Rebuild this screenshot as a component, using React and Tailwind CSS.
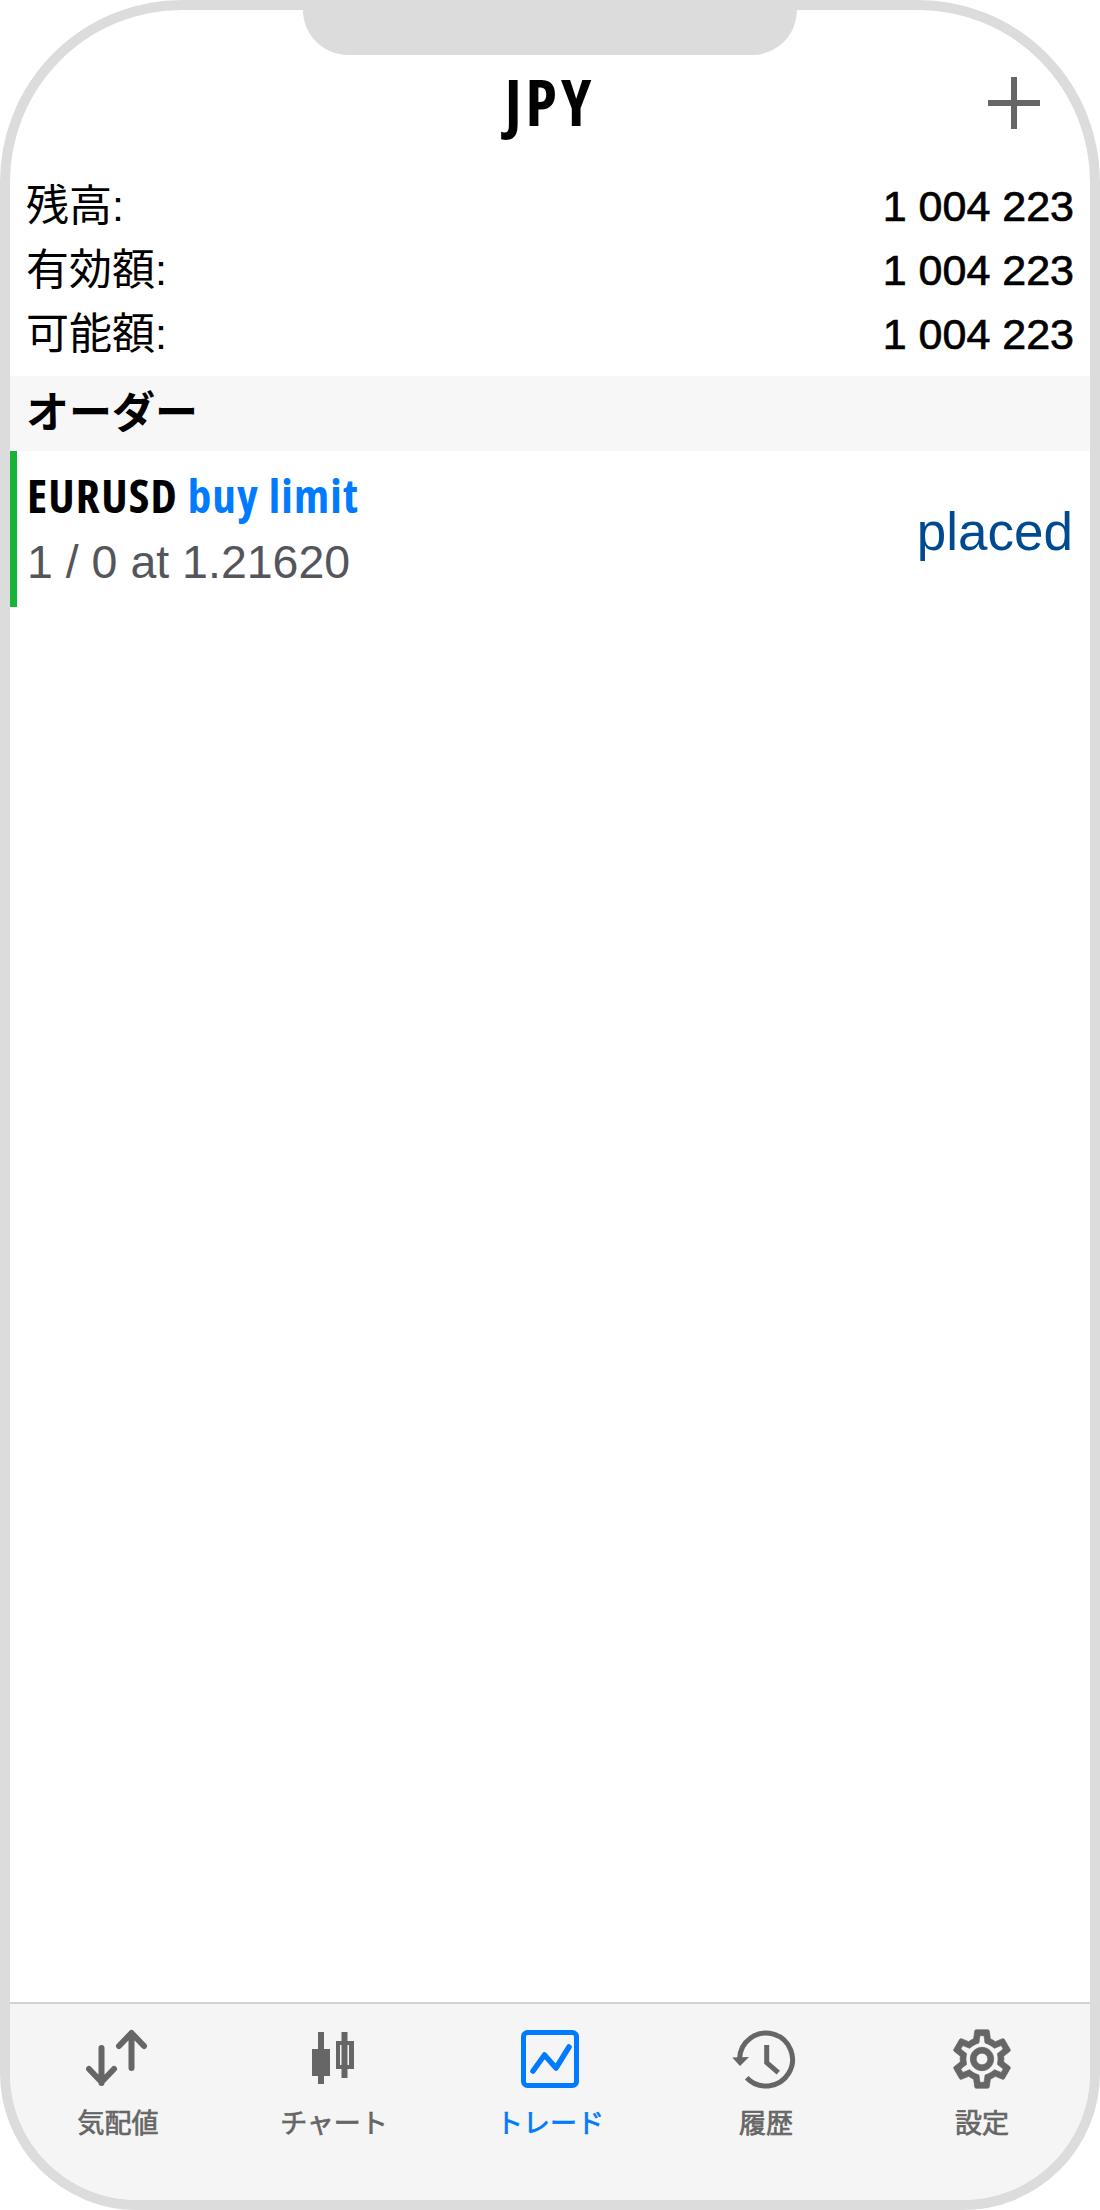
import React from "react";

const cjk = "font-['Liberation_Sans','Noto_Sans_CJK_JP',sans-serif]";
const condensed = "font-['Open_Sans','Noto_Sans',sans-serif] font-bold font-stretch-condensed";

const balances = [
  { label: "残高:", value: "1 004 223" },
  { label: "有効額:", value: "1 004 223" },
  { label: "可能額:", value: "1 004 223" },
];

const IconQuotes = () => (
  <svg width="64" height="60" viewBox="0 0 64 60" fill="none" stroke="#666666" strokeWidth="6" strokeLinecap="round" strokeLinejoin="round">
    <path d="M15.500 19 V54 M3 40 L15.500 53 L28 40" />
    <path d="M45.500 4 V39 M33 17 L45.500 4 L58 17" />
  </svg>
);

const IconChart = () => (
  <svg width="44" height="54" viewBox="0 0 44 54" fill="#666666">
    <rect x="6" y="0" width="6" height="52" />
    <rect x="0" y="17" width="18" height="27" />
    <rect x="29.500" y="0" width="6" height="46" />
    <path fillRule="evenodd" d="M24 9 H42 V37 H24 Z M28 13 V33 H37 V13 Z" />
  </svg>
);

const IconTrade = () => (
  <svg width="58" height="58" viewBox="0 0 58 58" fill="none" stroke="#007aff" strokeLinecap="round" strokeLinejoin="round">
    <rect x="2.500" y="2.500" width="53" height="53" rx="4" strokeWidth="5" />
    <path d="M12 41 L23.500 25 L35 38 L48 17" strokeWidth="5.500" />
  </svg>
);

const IconHistory = () => (
  <svg width="72" height="64" viewBox="0 0 72 64" fill="none" stroke="#666666" strokeWidth="5">
    <path d="M16.700 50.700 A26.500 26.500 0 1 0 9.500 32" />
    <path d="M2.300 30.500 L19 30 L10 39 Z" fill="#666666" stroke="none" />
    <path d="M36.700 18 V35.700 L48.300 45.700" />
  </svg>
);

const IconSettings = () => (
  <svg width="70" height="70" viewBox="0 0 24 24" fill="#666666" stroke="#666666" strokeWidth="0.25">
    <path d="M19.430 12.980c.040-.320.070-.640.070-.980 0-.340-.030-.660-.070-.980l2.110-1.650c.190-.150.240-.420.120-.640l-2-3.460c-.090-.160-.260-.250-.440-.250-.060 0-.120.010-.170.030l-2.490 1c-.520-.400-1.080-.730-1.690-.980l-.380-2.650C14.460 2.180 14.250 2 14 2h-4c-.250 0-.460.180-.490.420l-.380 2.650c-.610.250-1.170.590-1.690.980l-2.490-1c-.060-.020-.120-.030-.180-.030-.170 0-.340.090-.430.250l-2 3.460c-.130.220-.070.490.120.640l2.110 1.650c-.040.320-.070.650-.070.980 0 .330.030.660.070.980l-2.110 1.650c-.190.150-.240.420-.120.640l2 3.460c.090.160.260.250.440.250.060 0 .120-.010.170-.030l2.490-1c.520.400 1.080.730 1.690.980l.380 2.650c.030.240.240.420.490.420h4c.250 0 .460-.180.490-.420l.380-2.650c.610-.250 1.170-.590 1.690-.980l2.490 1c.060.020.120.030.180.030.170 0 .340-.090.430-.250l2-3.460c.120-.220.070-.490-.120-.640l-2.110-1.650zm-1.980-1.710c.040.310.050.520.050.730 0 .210-.020.430-.050.730l-.140 1.130.890.700 1.080.840-.700 1.210-1.270-.510-1.040-.420-.900.680c-.430.320-.840.560-1.250.730l-1.060.430-.160 1.130-.200 1.350h-1.400l-.190-1.350-.160-1.130-1.060-.430c-.430-.180-.830-.410-1.230-.710l-.910-.700-1.060.430-1.270.510-.700-1.210 1.080-.840.890-.700-.140-1.130c-.030-.310-.050-.540-.050-.740s.020-.430.050-.730l.140-1.130-.890-.700-1.080-.840.700-1.210 1.270.510 1.040.420.900-.680c.430-.320.840-.560 1.250-.730l1.060-.430.160-1.130.200-1.350h1.390l.190 1.350.160 1.130 1.060.430c.430.180.830.410 1.230.710l.910.700 1.060-.430 1.270-.510.700 1.210-1.070.850-.890.700.140 1.130zM12 8c-2.210 0-4 1.790-4 4s1.790 4 4 4 4-1.790 4-4-1.790-4-4-4zm0 6c-1.100 0-2-.900-2-2s.900-2 2-2 2 .900 2 2-.900 2-2 2z" />
  </svg>
);

const tabs = [
  { label: "気配値", icon: <IconQuotes /> },
  { label: "チャート", icon: <IconChart /> },
  { label: "トレード", icon: <IconTrade />, active: true },
  { label: "履歴", icon: <IconHistory /> },
  { label: "設定", icon: <IconSettings /> },
];

export default function App() {
  return (
    <div className="w-[1100px] h-[2210px] bg-white">
      <div className={`relative flex flex-col h-full border-[10px] border-[#dcdcdc] rounded-t-[182px] rounded-b-[137px] overflow-hidden bg-white ${cjk}`}>
        {/* ノッチ */}
        <div className="absolute top-0 left-[293px] w-[494px] h-[45px] bg-[#dcdcdc] rounded-b-[45px]" />

        <header className="relative flex items-center justify-center h-[164px] pt-[20px]">
          <h1 className={`text-[64px] leading-none tracking-[4px] text-black ${condensed}`}>JPY</h1>
          <svg className="absolute right-[50px] top-[67px]" width="52" height="52" viewBox="0 0 52 52" fill="#666666">
            <rect x="23" y="0" width="6" height="52" />
            <rect x="0" y="23" width="52" height="6" />
          </svg>
        </header>

        <section className="flex flex-col h-[202px] px-[16px]">
          {balances.map((row) => (
            <div key={row.label} className="flex items-center justify-between h-[64px] text-black">
              <span className="text-[43px] leading-none">{row.label}</span>
              <span className="text-[43px] leading-none [-webkit-text-stroke:0.7px_black]">{row.value}</span>
            </div>
          ))}
        </section>

        <div className="flex items-center h-[75px] px-[16px] bg-[#f7f7f7]">
          <h2 className="text-[43px] font-bold leading-none text-black">オーダー</h2>
        </div>

        <main className="flex-1">
          <div className="flex items-center justify-between h-[156px] pl-[10px] pr-[17px] border-l-[7px] border-[#14b538]">
            <div className="flex flex-col">
              <div className={`text-[47px] leading-[67px] tracking-[1.200px] ${condensed}`}>
                <span className="text-black">EURUSD</span> <span className="text-[#007aff]">buy limit</span>
              </div>
              <div className="text-[46.500px] leading-[67px] text-[#55555c]">1 / 0 at 1.21620</div>
            </div>
            <div className="pt-[4px] text-[53px] leading-none text-[#004a8f]">placed</div>
          </div>
        </main>

        <nav className="grid grid-cols-5 h-[198px] pt-[23px] bg-[#f5f5f5] border-t-2 border-[#d2d2d2]">
          {tabs.map((tab) => (
            <div key={tab.label} className={`flex flex-col items-center ${tab.active ? "text-[#007aff]" : "text-[#666666]"}`}>
              <div className="flex items-center justify-center h-[64px]">{tab.icon}</div>
              <span className="mt-[20px] text-[27px] leading-none [-webkit-text-stroke-width:0.7px]">{tab.label}</span>
            </div>
          ))}
        </nav>
      </div>
    </div>
  );
}
